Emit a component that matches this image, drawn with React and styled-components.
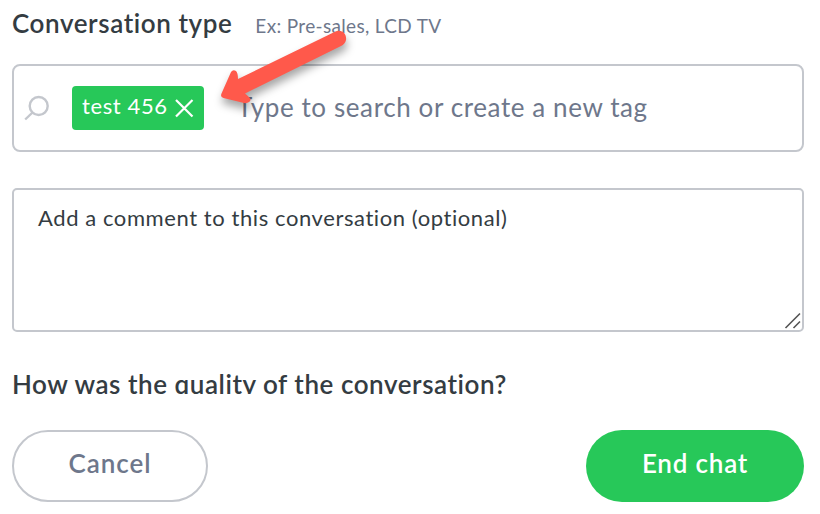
import React from "react";
import styled, { createGlobalStyle } from "styled-components";

const GlobalStyle = createGlobalStyle`
  *, *::before, *::after { box-sizing: border-box; }
  body { margin: 0; background: #fff; color: #343c42; font-family: Lato, sans-serif; overflow: hidden; }
`;

const Form = styled.main`
  display: flex;
  flex-direction: column;
  width: 820px;
  height: 514px;
  padding: 5px 16px 12px 12px;
`;

const Header = styled.header`
  display: flex;
  align-items: baseline;
  gap: 23px;
  height: 59px;
`;

const Text = styled.span`
  display: block;
  margin: 0;
  white-space: nowrap;
  font-size: ${(p) => p.$size}px;
  line-height: 36px;
  font-weight: ${(p) => p.$weight || 400};
  font-variant-ligatures: none;
  letter-spacing: ${(p) => p.$spacing || 0}px;
  color: ${(p) => p.$color || "#343c42"};
`;

const SearchField = styled.div`
  display: flex;
  align-items: center;
  height: 88px;
  padding: 0 10px;
  border: 2px solid #c4c7cd;
  border-radius: 8px;
`;

const SearchIcon = styled.svg`
  width: 26px;
  height: 26px;
  margin-right: 22px;
  flex: none;
`;

const Tag = styled.div`
  display: flex;
  align-items: center;
  justify-content: space-between;
  width: 132px;
  height: 44px;
  margin-right: 33px;
  padding: 0 10px 4px;
  border-radius: 4px;
  background: #27c859;
`;

const CloseIcon = styled.svg`
  width: 20px;
  height: 20px;
  margin-top: 4px;
  flex: none;
`;

const Placeholder = styled(Text)`
  padding-bottom: 2px;
`;

const CommentBox = styled.div`
  display: flex;
  justify-content: space-between;
  height: 144px;
  margin-top: 36px;
  padding: 10px 0 0 24px;
  border: 2px solid #c4c7cd;
  border-radius: 5px;
`;

const ResizeGrip = styled.svg`
  align-self: flex-end;
  width: 18px;
  height: 18px;
`;

const Question = styled.div`
  height: 28px;
  margin-top: 34px;
  overflow: hidden;
`;

const Actions = styled.footer`
  display: flex;
  justify-content: space-between;
  margin-top: 36px;
`;

const Button = styled.button`
  display: flex;
  justify-content: center;
  width: ${(p) => (p.$primary ? 218 : 196)}px;
  height: 72px;
  padding: ${(p) => (p.$primary ? 15 : 13)}px 0 0;
  border: ${(p) => (p.$primary ? "0" : "2px solid #c4c7cd")};
  border-radius: 36px;
  background: ${(p) => (p.$primary ? "#27c859" : "#fff")};
  font-family: inherit;
`;

const Arrow = styled.svg`
  position: absolute;
  left: 200px;
  top: 16px;
  width: 170px;
  height: 110px;
  pointer-events: none;
  filter: drop-shadow(1px 6px 4px rgba(0, 0, 0, 0.35));
`;

export default function App() {
  return (
    <>
      <GlobalStyle />
      <Form>
        <Header>
          <Text as="h1" $size={26} $weight={600} $spacing={0.59}>Conversation type</Text>
          <Text $size={19} $spacing={0.33} $color="#6e778b">Ex: Pre-sales, LCD TV</Text>
        </Header>
        <SearchField>
          <SearchIcon viewBox="0 0 26 26" fill="none" stroke="#c4c7cd" strokeWidth="2.4">
            <circle cx="14.700" cy="11" r="9" />
            <path d="M8.500 17.500 1.200 24.500" />
          </SearchIcon>
          <Tag>
            <Text $size={22} $spacing={0.62} $color="#fff">test 456</Text>
            <CloseIcon viewBox="0 0 20 20" fill="none" stroke="#fff" strokeWidth="2.2">
              <path d="M2 2 18.500 18.500M18.500 2 2 18.500" />
            </CloseIcon>
          </Tag>
          <Placeholder $size={26} $spacing={0.6} $color="#6e778b">Type to search or create a new tag</Placeholder>
        </SearchField>
        <CommentBox>
          <Text $size={22} $spacing={0.58}>Add a comment to this conversation (optional)</Text>
          <ResizeGrip viewBox="0 0 18 18" fill="none" stroke="#555" strokeWidth="1.6">
            <path d="M1.500 16 16 1.500M9.500 16 16 9.500" />
          </ResizeGrip>
        </CommentBox>
        <Question>
          <Text $size={26} $weight={600} $spacing={0.55}>How was the quality of the conversation?</Text>
        </Question>
        <Actions>
          <Button>
            <Text $size={26} $weight={600} $spacing={0.95} $color="#6e778b">Cancel</Text>
          </Button>
          <Button $primary>
            <Text $size={26} $weight={600} $spacing={0.8} $color="#fff">End chat</Text>
          </Button>
        </Actions>
      </Form>
      <Arrow viewBox="200 16 170 110" fill="#ff594b">
        <path d="M335.500 31.500C342 28.500 347 34 346 40Q345 44 341 46L245 93.500 249 97Q252 100 249 102Q247 103.500 244 103L223.500 98Q220 97 221.500 93.500L231 72Q233 69 236 71Q238 73 238 79Z" />
      </Arrow>
    </>
  );
}
